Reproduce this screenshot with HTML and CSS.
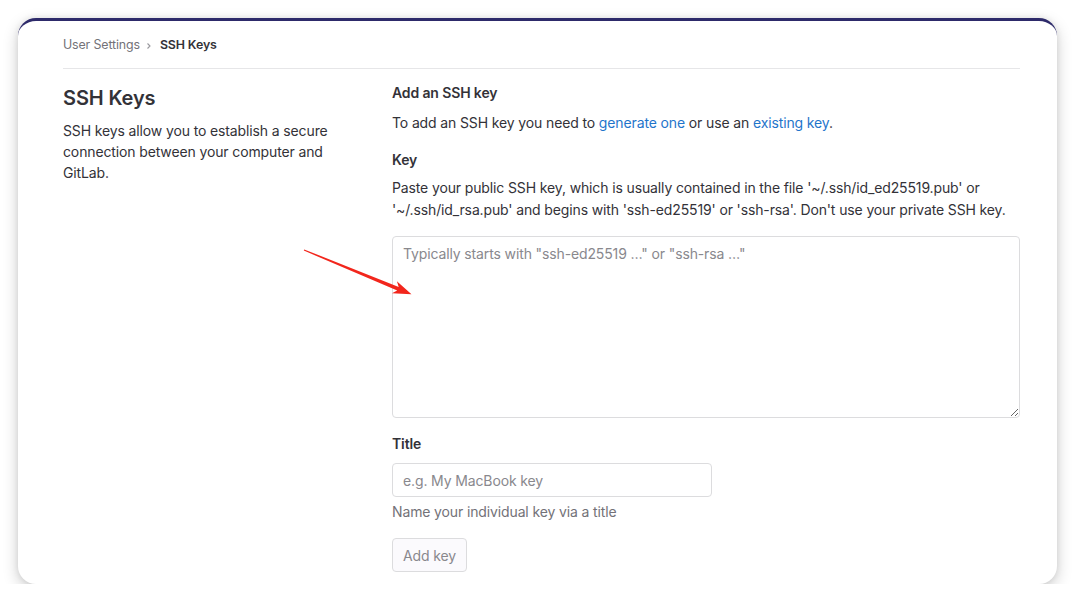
FILE: index.html
```html
<!DOCTYPE html>
<html lang="en">
<head>
<meta charset="utf-8">
<title>SSH Keys · User Settings</title>
<link rel="stylesheet" href="styles.css">
</head>
<body>
<div class="card">
  <nav class="breadcrumb">
    <span class="crumb">User Settings</span>
    <svg class="chev" width="8" height="8" viewBox="0 0 8 8"><path d="M2.5 1.5 L5 4 L2.5 6.5" fill="none" stroke="#9a999e" stroke-width="1.1"/></svg>
    <span class="crumb current">SSH Keys</span>
  </nav>
  <div class="row">
    <aside class="left">
      <h2 class="page-title">SSH Keys</h2>
      <p class="lead">SSH keys allow you to establish a secure connection between your computer and GitLab.</p>
    </aside>
    <section class="right">
      <h4 class="sub">Add an SSH key</h4>
      <p class="intro">To add an SSH key you need to <a href="#">generate one</a> or use an <a href="#">existing key</a>.</p>
      <label class="label">Key</label>
      <p class="help-top">Paste your public SSH key, which is usually contained in the file '~/.ssh/id_ed25519.pub' or '~/.ssh/id_rsa.pub' and begins with 'ssh-ed25519' or 'ssh-rsa'. Don't use your private SSH key.</p>
      <textarea class="key" placeholder="Typically starts with &quot;ssh-ed25519 …&quot; or &quot;ssh-rsa …&quot;"></textarea>
      <label class="label title-label">Title</label>
      <input class="title-input" type="text" placeholder="e.g. My MacBook key">
      <p class="help">Name your individual key via a title</p>
      <button class="btn" disabled>Add key</button>
    </section>
  </div>
  <svg class="arrow" width="130" height="70" viewBox="290 240 130 70">
    <polygon fill="#f2261c" points="304.2,249.4 398.7,286.9 396.9,281.3 411.5,294.2 392.0,293.2 397.2,290.4 303.8,250.6"/>
  </svg>
</div>
</body>
</html>
```

FILE: styles.css
```css
* { box-sizing: border-box; }
html, body { margin: 0; padding: 0; background: #fff; }
body {
  font-family: Inter, "Noto Sans", "Liberation Sans", sans-serif;
  color: #333238;
  font-size: 14px;
  letter-spacing: -0.13px;
}
.card {
  position: relative;
  margin: 18px 0 0 18px;
  width: 1039px;
  height: 566px;
  background: #fff;
  border-radius: 18px;
  border-top: 3px solid #2d2a6a;
  overflow: hidden;
  box-shadow: 0 5px 16px rgba(0, 0, 0, 0.2), 0 0 6px rgba(0, 0, 0, 0.08);
  padding: 0 37px 0 45px;
}
.breadcrumb {
  display: flex;
  align-items: center;
  padding: 14px 0 13px;
  border-bottom: 1px solid #e6e6e8;
  font-size: 12.4px;
  line-height: 20px;
}
.crumb { color: #737278; }
.crumb.current { color: #333238; font-weight: 600; }
.chev { margin: 1px 7px 0 5px; }
.row {
  display: grid;
  grid-template-columns: 329px 1fr;
  padding-top: 14px;
}
.left { padding-right: 30px; }
.page-title {
  margin: 3px 0 0;
  font-size: 20px;
  line-height: 24px;
  font-weight: 600;
  color: #333238;
}
.lead {
  margin: 10px 0 0;
  font-size: 14px;
  line-height: 21px;
  color: #333238;
}
.right { display: flex; flex-direction: column; align-items: flex-start; }
.sub {
  margin: 0;
  font-size: 14px;
  line-height: 20px;
  font-weight: 600;
}
.intro { margin: 10px 0 0; line-height: 20px; }
.intro a { color: #1f75cb; text-decoration: none; }
.label {
  display: block;
  margin-top: 17px;
  font-weight: 600;
  line-height: 20px;
}
.help-top { margin: 7px 0 0; line-height: 22px; }
.key {
  display: block;
  margin-top: 15px;
  width: 628px;
  height: 182px;
  border: 1px solid #dcdcde;
  border-radius: 4px;
  padding: 7px 10px;
  font-family: inherit;
  font-size: 14px;
  line-height: 20px;
  letter-spacing: -0.13px;
  color: #333238;
  resize: vertical;
}
.title-label { margin-top: 16px; }
.title-input {
  margin-top: 9px;
  width: 320px;
  height: 34px;
  border: 1px solid #dcdcde;
  border-radius: 4px;
  padding: 0 10px;
  font-family: inherit;
  font-size: 14px;
  letter-spacing: -0.13px;
  color: #333238;
}
::placeholder { color: #89888d; opacity: 1; }
.help { margin: 5px 0 0; line-height: 20px; color: #737278; }
.btn {
  margin-top: 16px;
  height: 34px;
  padding: 0 10px;
  border: 1px solid #dcdcde;
  border-radius: 4px;
  background: #fbfafd;
  color: #89888d;
  font-family: inherit;
  font-size: 14px;
  letter-spacing: -0.13px;
}
.arrow {
  position: absolute;
  left: 272px;
  top: 219px;
}
```
